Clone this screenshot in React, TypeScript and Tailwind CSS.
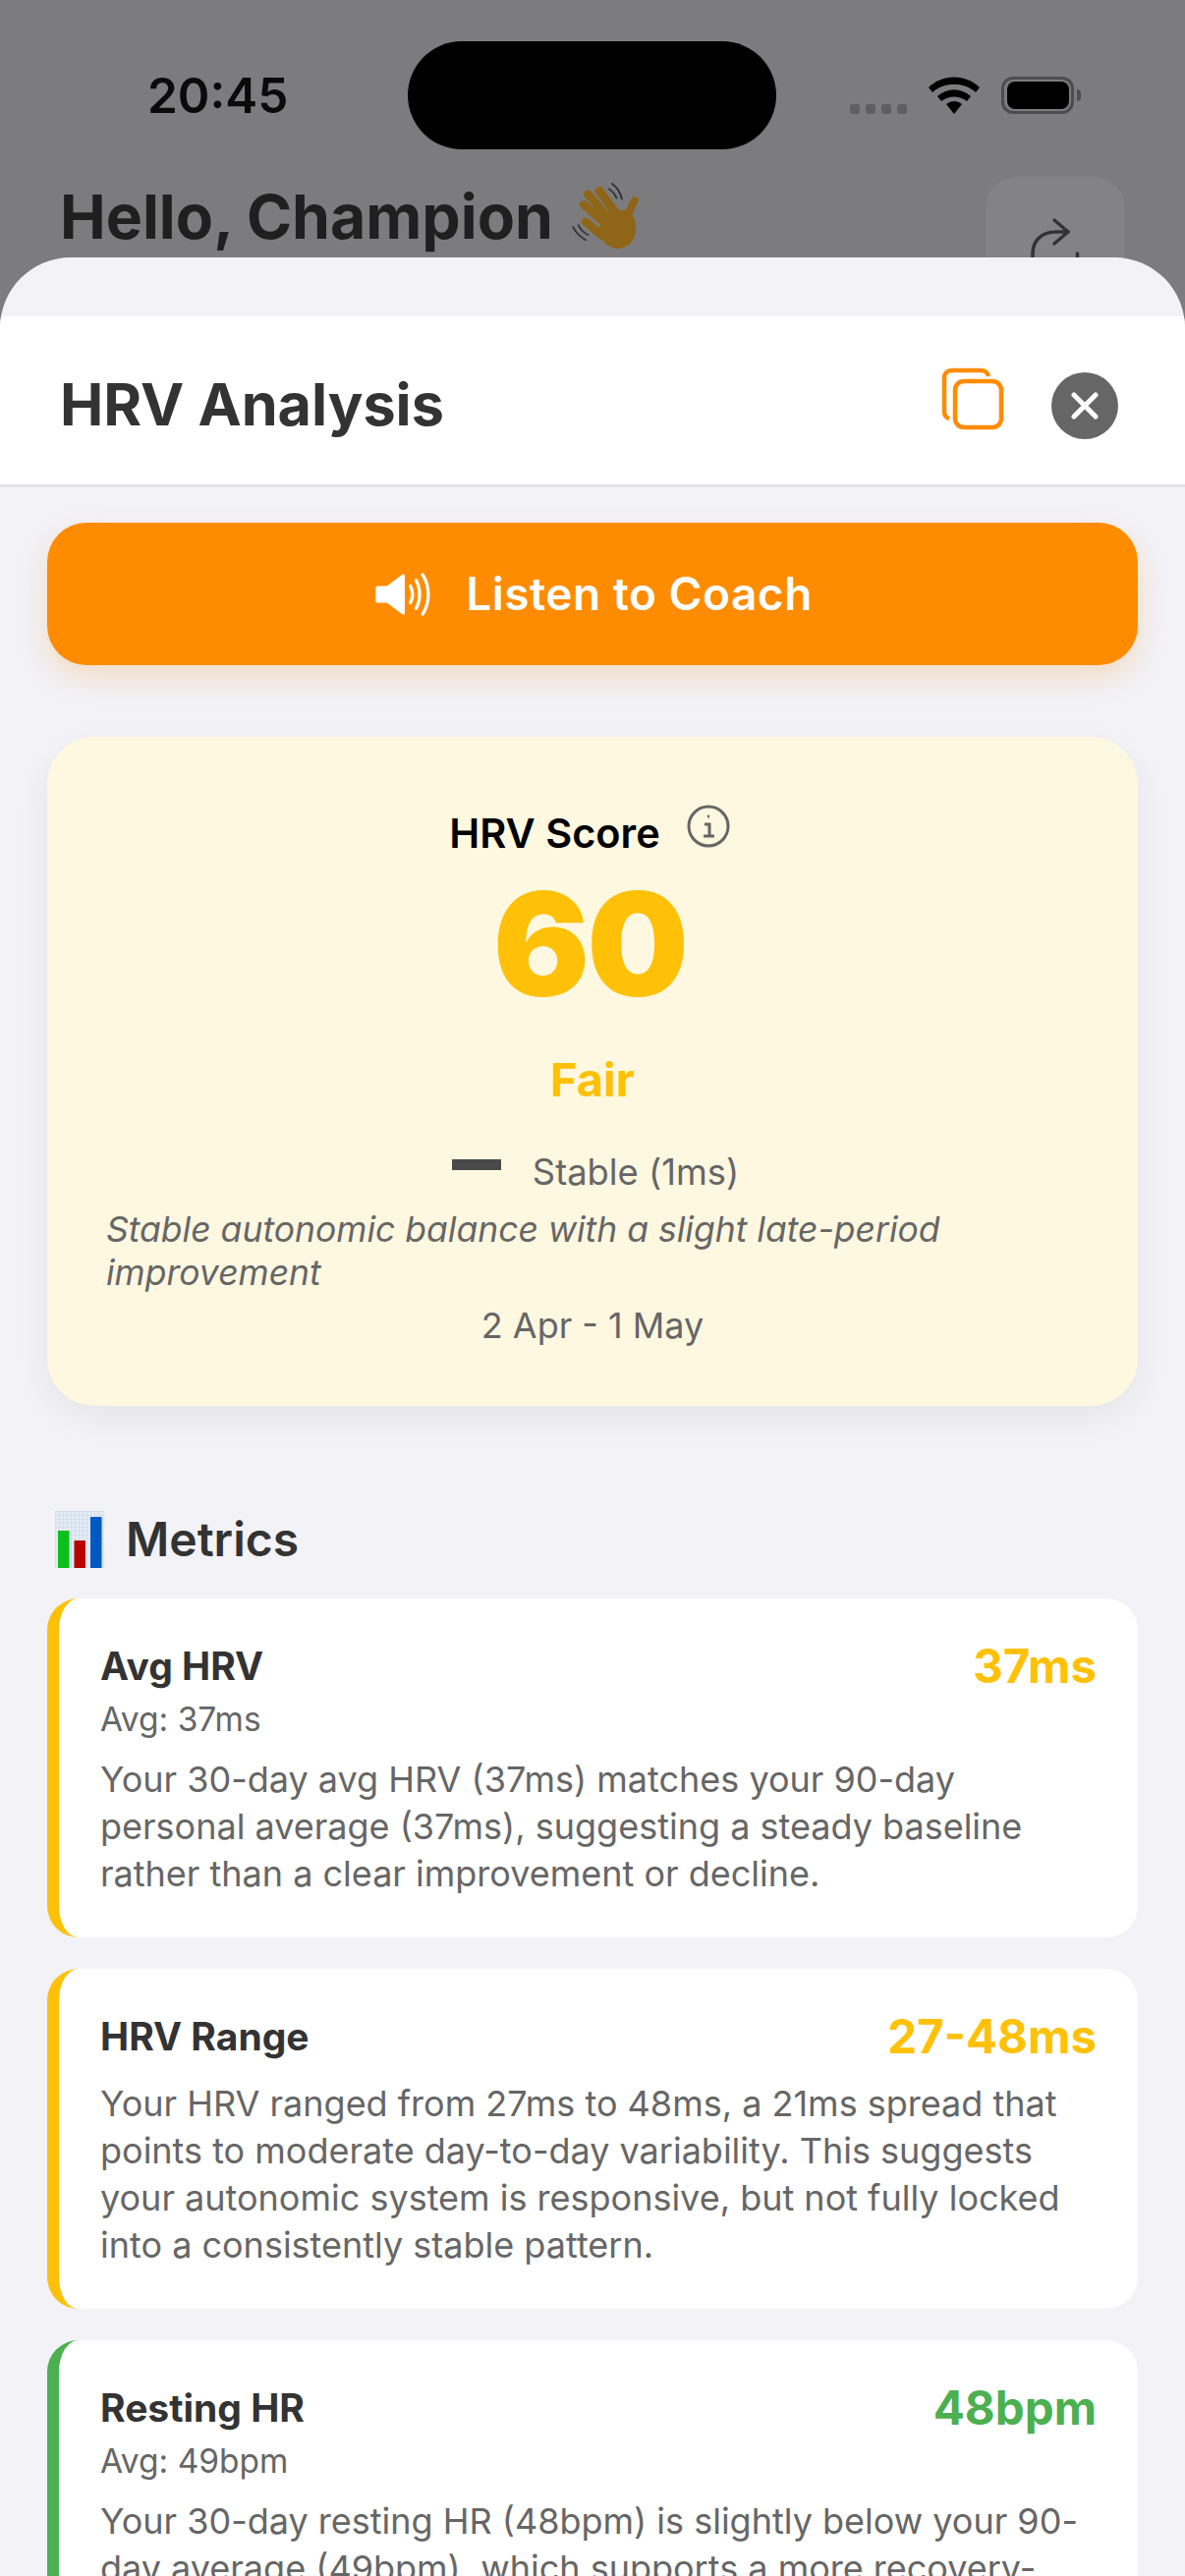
import React from 'react';

const FONT = "font-['Inter','Noto_Sans',sans-serif]";

interface MetricProps {
  title: string;
  value: string;
  avg?: string;
  body: string;
  accent: string;
  valueColor: string;
}

const WavingHand = () => (
  <svg width="70" height="68" viewBox="55 63 183 204" preserveAspectRatio="none" fill="none" className="shrink-0">
    <g stroke="#8f6518" strokeWidth="24" strokeLinecap="round">
      <path d="M128 88l47 72" />
      <path d="M98 98l57 77" />
      <path d="M87 130l58 60" />
      <path d="M92 182l43 43" />
    </g>
    <path d="M222 116l-20 50" stroke="#8f6518" strokeWidth="20" strokeLinecap="round" />
    <path d="M125 205l25-55 55-5q23 25 20 65-7 52-50 55-25-3-50-40z" fill="#8f6518" />
    <path d="M162 66q20 16 26 47M154 82q14 10 20 28M58 198q10 24 34 40M72 192q8 20 26 30" stroke="#333" strokeWidth="5" strokeLinecap="round" />
  </svg>
);

const ChartEmoji = () => (
  <svg width="50" height="58" viewBox="0 0 50 58" className="shrink-0">
    <defs>
      <pattern id="chart-grid" width="4" height="4" patternUnits="userSpaceOnUse">
        <rect width="4" height="4" fill="#e3ecf5" />
        <path d="M0 0h4M0 0v4" stroke="#c7d6e6" strokeWidth="1" />
      </pattern>
    </defs>
    <rect width="50" height="58" fill="url(#chart-grid)" />
    <rect x="3" y="20" width="11.5" height="38" fill="#0cc01c" />
    <rect x="19.5" y="30" width="11.5" height="28" fill="#b80000" />
    <rect x="36" y="6" width="11.5" height="52" fill="#0259c4" />
  </svg>
);

const Metric = ({ title, value, avg, body, accent, valueColor }: MetricProps) => (
  <div className={`rounded-[32px] border-l-[12px] bg-white pl-[42px] pr-[42px] pt-[44px] pb-[41px] ${accent}`}>
    <div className="mb-[8px] flex items-center justify-between">
      <span className="text-[39px] leading-[50px] font-bold text-[#333333]">{title}</span>
      <span className={`text-[47.5px] leading-[50px] font-bold ${valueColor}`}>{value}</span>
    </div>
    {avg && <div className="-mb-[3px] text-[33.5px] leading-[42px] text-[#666666]">{avg}</div>}
    <p className="mt-[19px] text-[36px] leading-[48px] text-[#666666]">{body}</p>
  </div>
);

export default function App() {
  return (
    <div className={`relative h-[2622px] w-[1206px] overflow-hidden bg-[#7c7c7e] ${FONT}`}>
      {/* status bar */}
      <div className="flex h-[180px] items-start">
        <span className="ml-[150px] mt-[67px] w-[140px] text-[49.5px] leading-[60px] font-semibold text-[#0a0a0a]">20:45</span>
        <div className="ml-[125px] mt-[42px] h-[110px] w-[375px] rounded-[55px] bg-black" />
        <div className="ml-[75px] mt-[78px] flex items-end">
          <div className="flex gap-[6px]">
            <span className="h-[10px] w-[10px] rounded-[3px] bg-[#5f5f61]" />
            <span className="h-[10px] w-[10px] rounded-[3px] bg-[#5f5f61]" />
            <span className="h-[10px] w-[10px] rounded-[3px] bg-[#5f5f61]" />
            <span className="h-[10px] w-[10px] rounded-[3px] bg-[#5f5f61]" />
          </div>
          <svg width="52" height="38" viewBox="0 0 52 38" className="ml-[22px]">
            <path d="M0 11C14-3 38-3 52 11l-4 5C36 5 16 5 4 16z" />
            <path d="M9 20c10-9 24-9 34 0l-4 5c-8-6-18-6-26 0z" />
            <path d="M18 28c5-4 11-4 16 0L26 38z" />
          </svg>
          <div className="relative ml-[22px] flex h-[38px] w-[74px] items-center justify-center rounded-[12px] border-[3px] border-[#4d4d4f]">
            <span className="h-[28px] w-[63px] rounded-[8px] bg-black" />
            <span className="absolute right-[-10px] h-[12px] w-[4px] rounded-r-full bg-[#4d4d4f]" />
          </div>
        </div>
      </div>

      {/* greeting behind the sheet */}
      <div className="flex items-start justify-between pl-[61px] pr-[61px]">
        <div className="flex items-center gap-[19px]">
          <span className="text-[62.5px] leading-[80px] font-bold text-[#1f1f1f]">Hello, Champion</span>
          <WavingHand />
        </div>
        <div className="flex h-[142px] w-[142px] justify-center rounded-[32px] bg-[#838385] pt-[40px]">
          <svg width="60" height="60" viewBox="0 0 60 60" fill="none" stroke="#333" strokeWidth="3.5" strokeLinecap="round" strokeLinejoin="round">
            <path d="M29 4l14 12-14 12" />
            <path d="M43 16H31C15 16 7 26 7 38v22" />
            <path d="M52.5 38v22" />
          </svg>
        </div>
      </div>

      {/* bottom sheet */}
      <div className="absolute inset-x-0 top-[262px] bottom-0 overflow-hidden rounded-t-[72px] bg-[#f2f2f7]">
        <header className="mt-[60px] flex h-[174px] items-center justify-between border-b-[3px] border-[#e2e2e8] bg-white pl-[61px] pr-[68px]">
          <h2 className="pt-[10px] text-[59.3px] font-bold text-[#333333]">HRV Analysis</h2>
          <div className="flex items-center gap-[48px]">
            <svg width="64" height="64" viewBox="0 0 64 64" fill="none" stroke="#ff8c00" strokeWidth="4.5" className="-mt-[4px]">
              <path d="M8 52c-3-1-5-3-5-7V11c0-5 3-8 8-8h29c4 0 7 2 8 6" />
              <rect x="14" y="14" width="47" height="47" rx="9" />
            </svg>
            <button className="mt-[10px] flex h-[68px] w-[68px] items-center justify-center rounded-full bg-[#666666]">
              <svg width="28" height="28" viewBox="0 0 28 28" stroke="white" strokeWidth="5" strokeLinecap="round">
                <path d="M3 3l22 22M25 3L3 25" />
              </svg>
            </button>
          </div>
        </header>

        <div className="px-[48px] pt-[36px]">
          <button className="flex h-[145px] w-full items-center justify-center gap-[34px] rounded-[40px] bg-[#ff8c00] pl-[3px] shadow-[0_12px_30px_rgba(255,140,0,0.22)]">
            <svg width="58" height="44" viewBox="0 0 60 46" fill="white">
              <path d="M2 14h10L28 2c2-1 3 0 3 2v38c0 2-1 3-3 2L12 32H2c-1 0-2-1-2-2V16c0-1 1-2 2-2z" />
              <g fill="none" stroke="white" strokeWidth="3.5" strokeLinecap="round">
                <path d="M37 14c3 6 3 12 0 18" />
                <path d="M43 8c5 9 5 21 0 30" />
                <path d="M50 2c8 13 8 29 0 42" />
              </g>
            </svg>
            <span className="text-[46px] font-semibold tracking-[0.5px] text-white">Listen to Coach</span>
          </button>

          <section className="mt-[73px] rounded-[48px] bg-[#fff8e1] px-[60px] pt-[70px] pb-[58px] shadow-[0_12px_36px_rgba(0,0,0,0.06)]">
            <div className="flex items-start justify-center pr-[6px]">
              <span className="text-[41.5px] leading-[56px] font-semibold text-black">HRV Score</span>
              <svg width="44" height="44" viewBox="0 0 44 44" fill="none" stroke="#666" strokeWidth="3" className="ml-[27px] -mt-[1px]">
                <circle cx="22" cy="22" r="20" />
                <path d="M18 20h5v11M17 32h11M21 12h2" />
              </svg>
            </div>
            <div className="mt-[5px] pr-[6px] text-center text-[146px] leading-[160px] font-black tracking-[-3px] text-[#ffc107]">60</div>
            <div className="mt-[28px] text-center text-[47px] leading-[60px] font-bold text-[#ffc107]">Fair</div>
            <div className="mt-[40px] flex items-center justify-center gap-[32px] pl-[6px]">
              <span className="mb-[16px] h-[11px] w-[50px] bg-[#4a4a4a]" />
              <span className="text-[36.3px] leading-[48px] text-[#666666]">Stable (1ms)</span>
            </div>
            <p className="mt-[13px] text-[35.5px] leading-[44px] text-[#666666] italic">
              Stable autonomic balance with a slight late-period improvement
            </p>
            <div className="mt-[7px] text-center text-[36px] leading-[48px] text-[#666666]">2 Apr - 1 May</div>
          </section>

          <div className="mt-[106px] flex items-center gap-[22px] pl-[8px]">
            <ChartEmoji />
            <h3 className="text-[48px] leading-[60px] font-semibold text-[#333333]">Metrics</h3>
          </div>

          <div className="mt-[30px] flex flex-col gap-[32px]">
            <Metric
              title="Avg HRV"
              value="37ms"
              avg="Avg: 37ms"
              accent="border-[#ffc107]"
              valueColor="text-[#ffc107]"
              body="Your 30-day avg HRV (37ms) matches your 90-day personal average (37ms), suggesting a steady baseline rather than a clear improvement or decline."
            />
            <Metric
              title="HRV Range"
              value="27-48ms"
              accent="border-[#ffc107]"
              valueColor="text-[#ffc107]"
              body="Your HRV ranged from 27ms to 48ms, a 21ms spread that points to moderate day-to-day variability. This suggests your autonomic system is responsive, but not fully locked into a consistently stable pattern."
            />
            <Metric
              title="Resting HR"
              value="48bpm"
              avg="Avg: 49bpm"
              accent="border-[#4caf50]"
              valueColor="text-[#4caf50]"
              body="Your 30-day resting HR (48bpm) is slightly below your 90-day average (49bpm), which supports a more recovery-friendly trend."
            />
          </div>
        </div>
      </div>
    </div>
  );
}
